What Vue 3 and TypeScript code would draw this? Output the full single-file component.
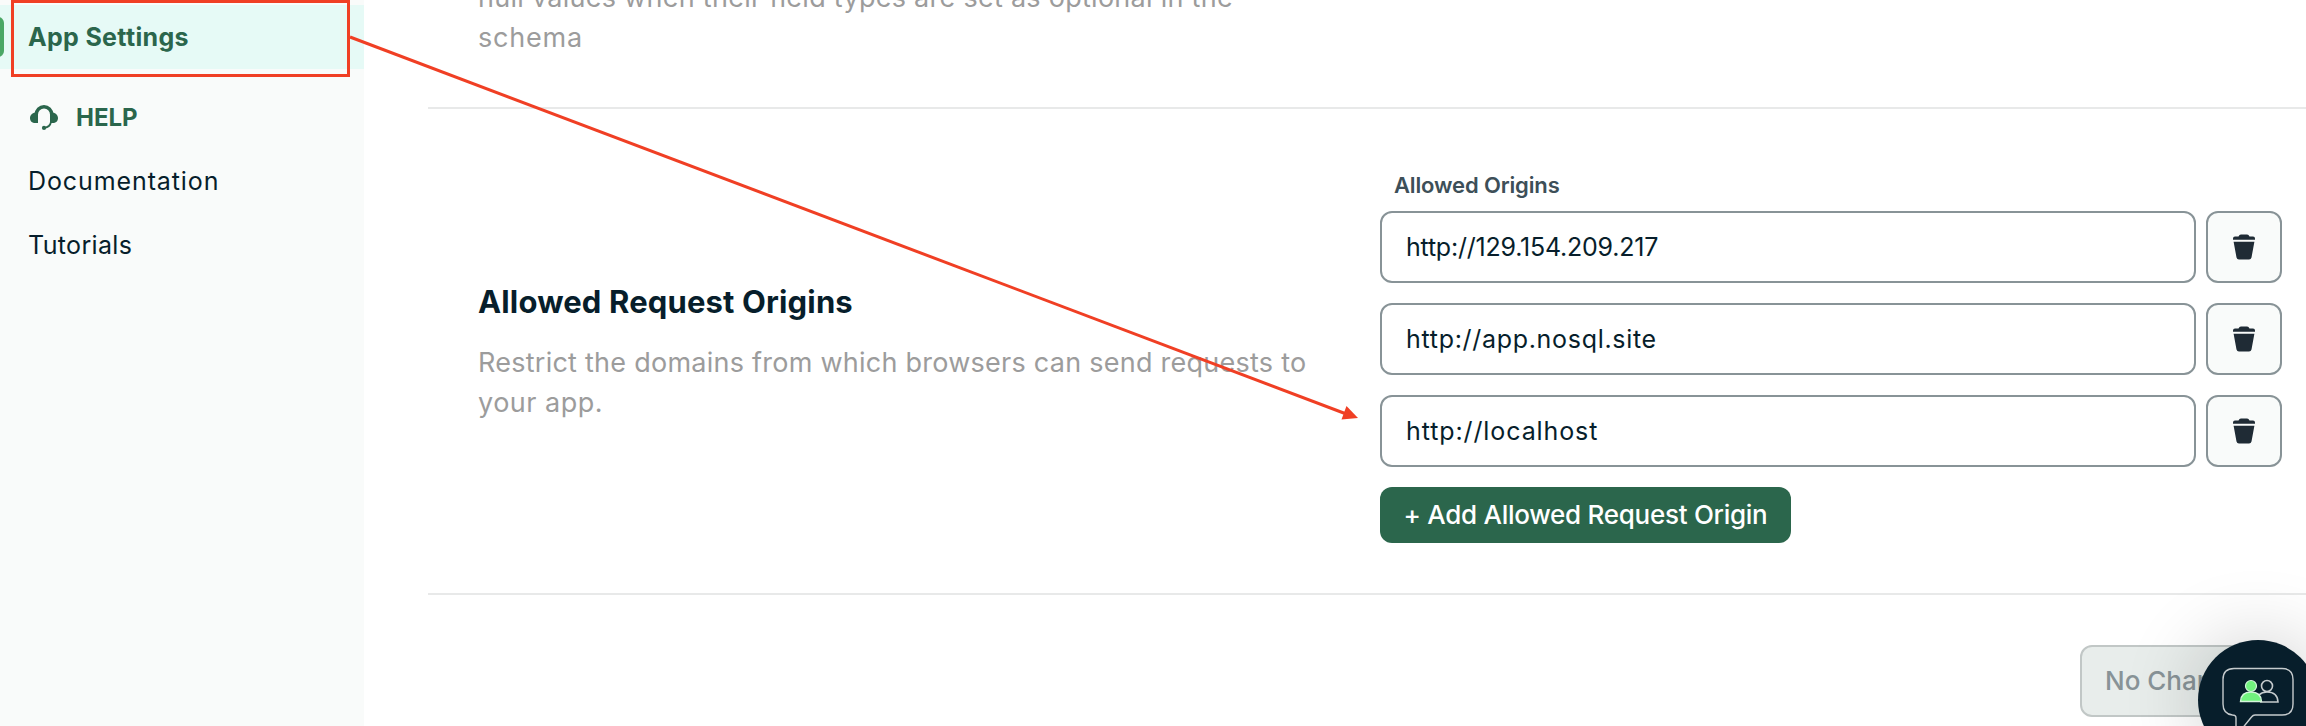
<script setup lang="ts">
import { ref } from 'vue'

const origins = ref<string[]>(['http://129.154.209.217', 'http://app.nosql.site', 'http://localhost'])
const helpLinks: string[] = ['Documentation', 'Tutorials']
</script>

<template>
  <div class="page">
    <aside class="sidebar">
      <a class="item active"><span class="t-active">App Settings</span></a>
      <div class="help">
        <svg class="headset" viewBox="0 0 28 26" width="28" height="26">
          <path d="M6.300 11V9.500A7.700 7.700 0 0 1 21.700 9.500V11" fill="none" stroke="currentColor" stroke-width="3.400" />
          <path d="M8 8V18H5.500C2 18 0 16 0 13S2.500 7.500 6 7.500ZM20 8V18H22.500C26 18 28 16 28 13S25.500 7.500 22 7.500Z" fill="currentColor" />
          <path d="M21 17C20.300 20.500 18 22.300 14.500 22.900" fill="none" stroke="currentColor" stroke-width="1.800" />
          <circle cx="14" cy="22.900" r="2.100" fill="currentColor" />
        </svg>
        <span class="t-help">HELP</span>
      </div>
      <a v-for="link in helpLinks" :key="link" class="item"><span :class="'t-' + link.toLowerCase()">{{ link }}</span></a>
    </aside>

    <main class="content">
      <section class="previous">
        <p class="desc"><span class="t-null">null values when their field types are set as optional in the</span><br /><span class="t-schema">schema</span></p>
      </section>

      <section class="origins">
        <div class="info">
          <h2><span class="t-heading">Allowed Request Origins</span></h2>
          <p class="desc"><span class="t-restrict">Restrict the domains from which browsers can send requests to</span><br /><span class="t-your">your app.</span></p>
        </div>
        <div class="form">
          <label><span class="t-label">Allowed Origins</span></label>
          <div v-for="(origin, i) in origins" :key="i" class="row">
            <div class="input"><span :class="'t-url' + i">{{ origin }}</span></div>
            <button class="trash" aria-label="Delete">
              <svg viewBox="0 0 22 26" width="22" height="26">
                <path d="M0 5.700V4.500Q0 2.500 2 2.500H5.500L6.500 0.900Q7 0.400 8 0.400H14Q15 0.400 15.500 0.900L16.500 2.500H20Q22 2.500 22 4.500V5.700ZM0.600 7.700H21.400L18.500 23.500Q18 25.600 16 25.600H6Q4 25.600 3.500 23.500Z" fill="#1f2b35" />
              </svg>
            </button>
          </div>
          <button class="add"><span class="t-add">+ Add Allowed Request Origin</span></button>
        </div>
      </section>

      <footer class="footer">
        <button class="save" disabled><span class="t-save">No Changes</span></button>
      </footer>
    </main>

    <div class="chat">
      <svg viewBox="0 0 120 120" width="120" height="120" fill="none">
        <path d="M36 28.500H84Q95 28.500 95 39.500V64Q95 75 84 75H57Q55 75 53.500 77L43 90Q38 94 38 87V78Q38 75 34.500 75Q25 74 25 64V39.500Q25 28.500 36 28.500Z" stroke="#c5cbcd" stroke-width="1.400" />
        <path d="M62 62H80Q79.500 52 69 52Q64 52 61 55" stroke="#c5cbcd" stroke-width="1.600" />
        <circle cx="69" cy="46" r="5.500" stroke="#c5cbcd" stroke-width="1.600" />
        <path d="M42.500 61.500Q43 52 53 52T63.500 61.500Z" fill="#71f27e" stroke="#d5f5dc" stroke-width="1.400" />
        <circle cx="53" cy="46" r="5.500" fill="#71f27e" stroke="#d5f5dc" stroke-width="1.200" />
      </svg>
    </div>

    <svg class="annotation" viewBox="0 0 2306 726" width="2306" height="726">
      <rect x="12.500" y="1.500" width="336" height="74" fill="none" stroke="#f03f24" stroke-width="3" />
      <path d="M350 37L1345 413.500" stroke="#f03f24" stroke-width="3" />
      <path d="M1358 418L1341.500 419.500L1346.500 406Z" fill="#f03f24" />
    </svg>
  </div>
</template>

<style>
html, body { overflow: hidden; background: #fff; }
</style>

<style scoped>
* { box-sizing: border-box; }
.page { position: relative; display: flex; width: 2306px; height: 726px; overflow: hidden; background: #fff; font-family: Inter, "Liberation Sans", sans-serif; color: #071e2b; }
span { white-space: nowrap; }
.sidebar { width: 364px; flex: none; background: #f9fbfa; padding-top: 5px; }
.item { display: flex; align-items: center; height: 64px; padding-left: 28px; font-size: 25px; }
.active { position: relative; background: #e6faf6; color: #2b664c; font-weight: 700; }
.active::before { content: ""; position: absolute; left: -8px; top: 12px; width: 12px; height: 40px; border-radius: 6px; background: #4aa765; }
.help { display: flex; align-items: center; height: 80px; padding: 17px 0 0 30px; gap: 18px; color: #2b664c; font-size: 24px; font-weight: 700; }
.content { flex: 1; padding-left: 64px; }
.previous { height: 109px; padding-left: 50px; border-bottom: 2px solid #e8e9e9; overflow: hidden; }
.previous .desc { margin-top: -22px; }
.desc { margin: 0; font-size: 27px; line-height: 40px; color: #9c9c9c; }
.origins { display: flex; align-items: center; height: 486px; padding-left: 50px; border-bottom: 2px solid #e8e9e9; }
.info { width: 902px; padding-top: 2px; }
h2 { margin: 0 0 21px; font-size: 31px; line-height: 40px; font-weight: 700; }
.form { width: 902px; align-self: flex-start; padding-top: 62px; }
label { display: block; height: 40px; padding-left: 14px; font-size: 22px; line-height: 28px; font-weight: 600; color: #3d4f58; }
.row { display: flex; gap: 10px; margin-bottom: 20px; }
.input { display: flex; align-items: center; width: 816px; height: 72px; padding-left: 24px; border: 2px solid #889397; border-radius: 12px; font-size: 25px; }
button { font-family: inherit; margin: 0; }
.trash { display: flex; align-items: center; justify-content: center; width: 76px; height: 72px; padding: 0; border: 2px solid #889397; border-radius: 12px; background: #f9fbfa; }
.add { display: flex; align-items: center; justify-content: center; width: 411px; height: 56px; padding: 0 0 2px; border: 0; border-radius: 12px; background: #2b664c; color: #fff; font-size: 26px; font-weight: 500; }
.footer { display: flex; justify-content: flex-end; padding: 50px 24px 0 0; }
.save { width: 202px; height: 72px; padding: 0 0 2px 23px; text-align: left; border: 2px solid #c1c7c6; border-radius: 12px; background: #e8edeb; color: #889397; font-size: 26px; font-weight: 500; }
.t-active { letter-spacing: 0.33px; }
.t-documentation { letter-spacing: 0.9px; }
.t-tutorials { letter-spacing: 0.35px; }
.t-null { letter-spacing: 0.27px; }
.t-schema { letter-spacing: 0.8px; }
.t-heading { letter-spacing: 0.15px; }
.t-restrict { letter-spacing: 0.25px; }
.t-your { letter-spacing: 0.5px; }
.t-label { letter-spacing: -0.14px; }
.t-url0 { letter-spacing: -0.22px; }
.t-url1 { letter-spacing: 0.7px; }
.t-url2 { letter-spacing: 0.9px; }
.t-add { letter-spacing: -0.27px; }
.chat { position: absolute; left: 2198px; top: 640px; width: 120px; height: 120px; border-radius: 50%; background: #071e2b; box-shadow: 0 0 80px rgba(0, 0, 0, 0.2); }
.chat svg { display: block; }
.annotation { position: absolute; left: 0; top: 0; pointer-events: none; }
</style>
